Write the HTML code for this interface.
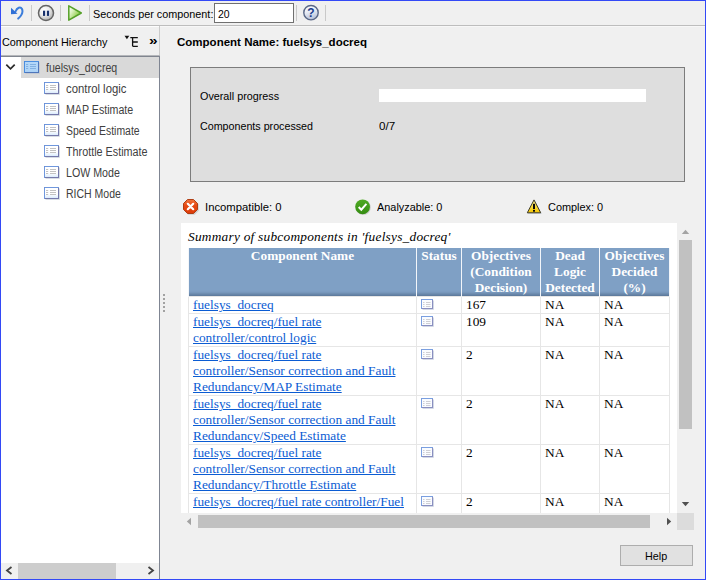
<!DOCTYPE html>
<html><head>
<meta charset="utf-8">
<title>Component Analysis</title>
<style>
html,body{margin:0;padding:0;}
body{width:706px;height:580px;overflow:hidden;background:#f0f0f0;font-family:"Liberation Sans",sans-serif;font-size:11px;color:#000;position:relative;}
.abs{position:absolute;}
.f{position:absolute;white-space:nowrap;transform-origin:0 50%;display:block;}
#frame{position:absolute;left:0;top:0;width:704px;height:578px;border:1px solid #3349f6;z-index:50;}
.sep{position:absolute;top:5px;width:1px;height:16px;background:#c9c9c9;}
#web{position:absolute;left:181px;top:223px;width:496px;height:290px;background:#fff;overflow:hidden;font-family:"Liberation Serif",serif;}
#web table{border-collapse:collapse;position:absolute;left:7px;top:25px;table-layout:fixed;width:481px;}
#web th{background:#7fa0c5;background-image:linear-gradient(to bottom,#7fa0c5 0,#7fa0c5 42px,#7b9bbf 44px,#5b7799 48px);color:#fff;font-weight:bold;font-size:13.33px;line-height:16px;height:48px;vertical-align:top;padding:0 1px;border-left:1px solid #f3f6fa;border-right:1px solid #f3f6fa;text-align:center;}
#web td{font-size:13.33px;line-height:16px;vertical-align:top;padding:0 0 0 4px;border:1px solid #e6e6e6;color:#000;white-space:nowrap;overflow:hidden;}
#web td a{color:#0b5cd3;text-decoration:underline;}
</style>
</head>
<body>
<!-- toolbar -->
<div class="abs" style="left:1px;top:25px;width:704px;height:1px;background:#bdbdbd"></div>
<div class="abs" style="left:1px;top:26px;width:158px;height:1px;background:#fdfdfd"></div>
<div class="abs" style="left:160px;top:26px;width:545px;height:1px;background:#f7f7f7"></div>
<svg class="abs" style="left:10px;top:5px" width="15" height="15" viewBox="0 0 15 15"><path d="M5.500 6.500C7 2.500 10.500 1.200 12 4C13.300 7 11 11 8.200 13.600" fill="none" stroke="#3b7ddb" stroke-width="2" stroke-linecap="round"></path><path d="M1 2.800L1 9.200L7.500 8.800Z" fill="#2f6fd6"></path></svg>
<div class="sep" style="left:31px"></div>
<svg class="abs" style="left:37px;top:4px" width="18" height="18" viewBox="0 0 18 18"><defs><radialGradient id="pg" cx="0.38" cy="0.32" r="0.75"><stop offset="0" stop-color="#ffffff"></stop><stop offset="0.45" stop-color="#ececec"></stop><stop offset="1" stop-color="#a9a9a9"></stop></radialGradient></defs><circle cx="9" cy="9" r="7.500" fill="url(#pg)" stroke="#646464" stroke-width="1.500"></circle><rect x="6" y="6.700" width="2.100" height="5.200" fill="#17306a"></rect><rect x="9.900" y="6.700" width="2.100" height="5.200" fill="#17306a"></rect><rect x="8.100" y="6.700" width="0.700" height="5.200" fill="#c9d2f0"></rect><rect x="12" y="6.700" width="0.700" height="5.200" fill="#c9d2f0"></rect></svg>
<div class="sep" style="left:60px"></div>
<svg class="abs" style="left:67px;top:4px" width="16" height="18" viewBox="0 0 16 18"><defs><linearGradient id="gg" x1="0" y1="0.100" x2="0.900" y2="0.800"><stop offset="0" stop-color="#ffffff"></stop><stop offset="0.350" stop-color="#d9f0bd"></stop><stop offset="0.700" stop-color="#a3d668"></stop><stop offset="1" stop-color="#8cc94a"></stop></linearGradient></defs><path d="M1.800 1.800L14.300 9L1.800 16.200Z" fill="url(#gg)" stroke="#55a028" stroke-width="1.500" stroke-linejoin="round"></path></svg>
<div class="sep" style="left:89px"></div>
<span class="f" style="left: 92.6px; top: 7.19px; font-size: 11px; line-height: 14px; --w: 120.4; transform: scaleX(0.9844);">Seconds per component:</span>
<div class="abs" style="left:214px;top:3px;width:78px;height:18px;background:#fff;border:1px solid #707070;"></div>
<span class="f" style="left: 218.2px; top: 7.19px; font-size: 11px; line-height: 14px; --w: 11.6; transform: scaleX(0.9469);">20</span>
<div class="sep" style="left:296px"></div>
<svg class="abs" style="left:302px;top:4px" width="18" height="18" viewBox="0 0 18 18"><defs><linearGradient id="hg" x1="0" y1="0" x2="0.300" y2="1"><stop offset="0" stop-color="#ffffff"></stop><stop offset="0.500" stop-color="#e8ecf5"></stop><stop offset="1" stop-color="#b9c4dc"></stop></linearGradient></defs><circle cx="9" cy="8.700" r="7.200" fill="url(#hg)" stroke="#5a6887" stroke-width="1.400"></circle><text x="9" y="13" text-anchor="middle" font-family="Liberation Sans, sans-serif" font-weight="bold" font-size="12" fill="#1b3c8c">?</text></svg>
<div class="sep" style="left:325px"></div>

<!-- left panel -->
<div class="abs" style="left:159px;top:26px;width:1px;height:30px;background:#cacaca"></div>
<div class="abs" style="left:1px;top:57px;width:158px;height:506px;background:#fff"></div>
<div class="abs" style="left:1px;top:55px;width:159px;height:1px;background:#b4b6ba"></div>
<div class="abs" style="left:1px;top:56px;width:159px;height:1px;background:#80858f"></div>
<div class="abs" style="left:159px;top:56px;width:1px;height:523px;background:#7f8592"></div>
<span class="f" style="left: 1.6px; top: 35.19px; font-size: 11px; line-height: 14px; --w: 105.4; transform: scaleX(0.985);">Component Hierarchy</span>
<svg class="abs" style="left:124px;top:35px" width="15" height="13" viewBox="0 0 15 13"><path d="M0.500 0.800L5.300 0.800L2.900 4.200Z" fill="#111"></path><path d="M6.300 2.600H13.800M8.600 2.600V11.300M8.600 7H13.800M8.600 11.300H13.800" stroke="#111" stroke-width="1.300" fill="none"></path></svg>
<span class="f" style="left: 148.5px; top: 32.5px; font-size: 13px; line-height: 16px; font-weight: bold; --w: 8.600; transform: scaleX(1.1888);">»</span>
<div class="abs" style="left:21px;top:57px;width:138px;height:21px;background:#d9d9d9"></div>
<svg class="abs" style="left:5px;top:63px" width="11" height="8" viewBox="0 0 11 8"><path d="M1.300 1.600L5.500 5.900L9.700 1.600" fill="none" stroke="#2b2b2b" stroke-width="1.700"></path></svg>
<svg class="abs" style="left:24px;top:61px" width="16" height="13" viewBox="0 0 16 13"><defs><linearGradient id="ig1" x1="0" y1="0" x2="0" y2="1"><stop offset="0" stop-color="#b3d7f8"></stop><stop offset="0.6" stop-color="#b3d7f8"></stop><stop offset="1" stop-color="#a9d0f6"></stop></linearGradient></defs><path d="M1.500 12.500H15.500V1.500" stroke="#c3c9d3" fill="none"></path><rect x="0.500" y="0.500" width="14" height="11" fill="url(#ig1)" stroke="#4f76ba"></rect><path d="M0.500 12V0.500H15" stroke="#4a8ee0" fill="none"></path><path d="M2 3.500h2.200M6 3.500h6M2 5.500h2.200M6 5.500h6M2 7.500h2.200M6 7.500h6" stroke="#82b1e2" stroke-width="1"></path></svg>
<span class="f" style="left: 45.7px; top: 61.34px; font-size: 12px; line-height: 15px; --w: 71.2; color: rgb(64, 64, 64); transform: scaleX(0.8821);">fuelsys_docreq</span>
<svg class="abs" style="left:44px;top:82px" width="16" height="13" viewBox="0 0 16 13"><defs><linearGradient id="ig2" x1="0" y1="0" x2="0" y2="1"><stop offset="0" stop-color="#ffffff"></stop><stop offset="0.6" stop-color="#ffffff"></stop><stop offset="1" stop-color="#d6e9fc"></stop></linearGradient></defs><path d="M1.500 12.500H15.500V1.500" stroke="#d6dde4" fill="none"></path><rect x="0.500" y="0.500" width="14" height="11" fill="url(#ig2)" stroke="#7579ab"></rect><path d="M0.500 12V0.500H15" stroke="#6f97dd" fill="none"></path><path d="M2 3.500h2.200M6 3.500h6M2 5.500h2.200M6 5.500h6M2 7.500h2.200M6 7.500h6" stroke="#c2c2c2" stroke-width="1"></path></svg>
<span class="f" style="left: 66.4px; top: 82.34px; font-size: 12px; line-height: 15px; --w: 60.4; color: rgb(64, 64, 64); transform: scaleX(0.9433);">control logic</span>
<svg class="abs" style="left:44px;top:103px" width="16" height="13" viewBox="0 0 16 13"><defs><linearGradient id="ig3" x1="0" y1="0" x2="0" y2="1"><stop offset="0" stop-color="#ffffff"></stop><stop offset="0.6" stop-color="#ffffff"></stop><stop offset="1" stop-color="#d6e9fc"></stop></linearGradient></defs><path d="M1.500 12.500H15.500V1.500" stroke="#d6dde4" fill="none"></path><rect x="0.500" y="0.500" width="14" height="11" fill="url(#ig3)" stroke="#7579ab"></rect><path d="M0.500 12V0.500H15" stroke="#6f97dd" fill="none"></path><path d="M2 3.500h2.200M6 3.500h6M2 5.500h2.200M6 5.500h6M2 7.500h2.200M6 7.500h6" stroke="#c2c2c2" stroke-width="1"></path></svg>
<span class="f" style="left: 66.4px; top: 103.34px; font-size: 12px; line-height: 15px; --w: 67.2; color: rgb(64, 64, 64); transform: scaleX(0.8864);">MAP Estimate</span>
<svg class="abs" style="left:44px;top:124px" width="16" height="13" viewBox="0 0 16 13"><defs><linearGradient id="ig4" x1="0" y1="0" x2="0" y2="1"><stop offset="0" stop-color="#ffffff"></stop><stop offset="0.6" stop-color="#ffffff"></stop><stop offset="1" stop-color="#d6e9fc"></stop></linearGradient></defs><path d="M1.500 12.500H15.500V1.500" stroke="#d6dde4" fill="none"></path><rect x="0.500" y="0.500" width="14" height="11" fill="url(#ig4)" stroke="#7579ab"></rect><path d="M0.500 12V0.500H15" stroke="#6f97dd" fill="none"></path><path d="M2 3.500h2.200M6 3.500h6M2 5.500h2.200M6 5.500h6M2 7.500h2.200M6 7.500h6" stroke="#c2c2c2" stroke-width="1"></path></svg>
<span class="f" style="left: 66.4px; top: 124.34px; font-size: 12px; line-height: 15px; --w: 73.6; color: rgb(64, 64, 64); transform: scaleX(0.8688);">Speed Estimate</span>
<svg class="abs" style="left:44px;top:145px" width="16" height="13" viewBox="0 0 16 13"><defs><linearGradient id="ig5" x1="0" y1="0" x2="0" y2="1"><stop offset="0" stop-color="#ffffff"></stop><stop offset="0.6" stop-color="#ffffff"></stop><stop offset="1" stop-color="#d6e9fc"></stop></linearGradient></defs><path d="M1.500 12.500H15.500V1.500" stroke="#d6dde4" fill="none"></path><rect x="0.500" y="0.500" width="14" height="11" fill="url(#ig5)" stroke="#7579ab"></rect><path d="M0.500 12V0.500H15" stroke="#6f97dd" fill="none"></path><path d="M2 3.500h2.200M6 3.500h6M2 5.500h2.200M6 5.500h6M2 7.500h2.200M6 7.500h6" stroke="#c2c2c2" stroke-width="1"></path></svg>
<span class="f" style="left: 66.4px; top: 145.34px; font-size: 12px; line-height: 15px; --w: 81.6; color: rgb(64, 64, 64); transform: scaleX(0.8996);">Throttle Estimate</span>
<svg class="abs" style="left:44px;top:166px" width="16" height="13" viewBox="0 0 16 13"><defs><linearGradient id="ig6" x1="0" y1="0" x2="0" y2="1"><stop offset="0" stop-color="#ffffff"></stop><stop offset="0.6" stop-color="#ffffff"></stop><stop offset="1" stop-color="#d6e9fc"></stop></linearGradient></defs><path d="M1.500 12.500H15.500V1.500" stroke="#d6dde4" fill="none"></path><rect x="0.500" y="0.500" width="14" height="11" fill="url(#ig6)" stroke="#7579ab"></rect><path d="M0.500 12V0.500H15" stroke="#6f97dd" fill="none"></path><path d="M2 3.500h2.200M6 3.500h6M2 5.500h2.200M6 5.500h6M2 7.500h2.200M6 7.500h6" stroke="#c2c2c2" stroke-width="1"></path></svg>
<span class="f" style="left: 66.4px; top: 166.34px; font-size: 12px; line-height: 15px; --w: 53.9; color: rgb(64, 64, 64); transform: scaleX(0.8882);">LOW Mode</span>
<svg class="abs" style="left:44px;top:187px" width="16" height="13" viewBox="0 0 16 13"><defs><linearGradient id="ig7" x1="0" y1="0" x2="0" y2="1"><stop offset="0" stop-color="#ffffff"></stop><stop offset="0.6" stop-color="#ffffff"></stop><stop offset="1" stop-color="#d6e9fc"></stop></linearGradient></defs><path d="M1.500 12.500H15.500V1.500" stroke="#d6dde4" fill="none"></path><rect x="0.500" y="0.500" width="14" height="11" fill="url(#ig7)" stroke="#7579ab"></rect><path d="M0.500 12V0.500H15" stroke="#6f97dd" fill="none"></path><path d="M2 3.500h2.200M6 3.500h6M2 5.500h2.200M6 5.500h6M2 7.500h2.200M6 7.500h6" stroke="#c2c2c2" stroke-width="1"></path></svg>
<span class="f" style="left: 66.4px; top: 187.34px; font-size: 12px; line-height: 15px; --w: 54.9; color: rgb(64, 64, 64); transform: scaleX(0.8758);">RICH Mode</span>

<!-- left hscroll -->
<div class="abs" style="left:1px;top:563px;width:158px;height:16px;background:#f0f0f0"></div>
<div class="abs" style="left:18px;top:563px;width:98px;height:16px;background:#cdcdcd"></div>
<svg class="abs" style="left:5px;top:566px" width="8" height="9" viewBox="0 0 8 9"><path d="M6.500 1L2 4.500L6.500 8" fill="none" stroke="#444" stroke-width="1.800"></path></svg>
<svg class="abs" style="left:147px;top:566px" width="8" height="9" viewBox="0 0 8 9"><path d="M1.500 1L6 4.500L1.500 8" fill="none" stroke="#444" stroke-width="1.800"></path></svg>

<!-- splitter dots -->
<div class="abs" style="left:163px;top:294px;width:2px;height:2px;background:#a2a2a2;box-shadow:0 4px 0 #a2a2a2,0 8px 0 #a2a2a2,0 12px 0 #a2a2a2,0 16px 0 #a2a2a2"></div>

<!-- right panel -->
<span class="f" style="left: 176.6px; top: 35.19px; font-size: 11px; line-height: 14px; --w: 190; font-weight: bold; transform: scaleX(1.0466);">Component Name: fuelsys_docreq</span>
<div class="abs" style="left:190px;top:67px;width:493px;height:113px;background:#dedede;border:1px solid #7c7c7c;"></div>
<span class="f" style="left: 199.8px; top: 89.19px; font-size: 11px; line-height: 14px; --w: 79.1; transform: scaleX(0.9801);">Overall progress</span>
<div class="abs" style="left:379px;top:89px;width:267px;height:13px;background:#fff;"></div>
<span class="f" style="left: 199.8px; top: 119.19px; font-size: 11px; line-height: 14px; --w: 113; transform: scaleX(0.9726);">Components processed</span>
<span class="f" style="left: 379.4px; top: 119.19px; font-size: 11px; line-height: 14px; --w: 16.2; transform: scaleX(1.059);">0/7</span>

<svg class="abs" style="left:182px;top:198px" width="18" height="18" viewBox="0 0 18 18"><defs><linearGradient id="rg" x1="0" y1="0" x2="0" y2="1"><stop offset="0" stop-color="#f0743c"></stop><stop offset="0.45" stop-color="#e64812"></stop><stop offset="1" stop-color="#dd3b08"></stop></linearGradient></defs><path d="M6.300 2.300H12.700L16.700 6.300V12.700L12.700 16.700H6.300L2.300 12.700V6.300Z" fill="#b9b9b9" opacity="0.6"></path><path d="M5.500 1.500H11.500L15.500 5.500V11.500L11.500 15.500H5.500L1.500 11.500V5.500Z" fill="url(#rg)" stroke="#a83309" stroke-width="0.900"></path><path d="M5.800 5.800L11.200 11.200M11.200 5.800L5.800 11.200" stroke="#fff" stroke-width="2.200" stroke-linecap="round"></path></svg>
<span class="f" style="left: 204.9px; top: 200.19px; font-size: 11px; line-height: 14px; --w: 76.5; transform: scaleX(1.0253);">Incompatible: 0</span>
<svg class="abs" style="left:354px;top:198px" width="18" height="18" viewBox="0 0 18 18"><defs><linearGradient id="cg" x1="0" y1="0" x2="0" y2="1"><stop offset="0" stop-color="#4fab24"></stop><stop offset="1" stop-color="#358c12"></stop></linearGradient></defs><circle cx="9.300" cy="9.500" r="7.500" fill="#b5b5b5" opacity="0.600"></circle><circle cx="8.600" cy="8.800" r="7.400" fill="url(#cg)"></circle><path d="M4.700 9L7.300 11.700L12.400 5.900" fill="none" stroke="#fff" stroke-width="2"></path></svg>
<span class="f" style="left: 377px; top: 200.19px; font-size: 11px; line-height: 14px; --w: 65.4; transform: scaleX(0.9902);">Analyzable: 0</span>
<svg class="abs" style="left:526px;top:198px" width="18" height="18" viewBox="0 0 18 18"><defs><linearGradient id="wg" x1="0" y1="0" x2="0" y2="1"><stop offset="0" stop-color="#fff09a"></stop><stop offset="0.500" stop-color="#fbdc3c"></stop><stop offset="1" stop-color="#f4c400"></stop></linearGradient></defs><path d="M8.800 2.400L15.900 15.800H1.700Z" fill="#a9b4c4" opacity="0.550"></path><path d="M8 1.900L14.700 14.800H1.300Z" fill="url(#wg)" stroke="#3d3a2a" stroke-width="1" stroke-linejoin="round"></path><rect x="7" y="5.800" width="2" height="5.300" fill="#0a0a0a"></rect><rect x="7" y="12" width="2" height="1.700" fill="#0a0a0a"></rect></svg>
<span class="f" style="left: 548.1px; top: 200.19px; font-size: 11px; line-height: 14px; --w: 55.2; transform: scaleX(0.9921);">Complex: 0</span>

<!-- web view -->
<div id="web">
<span class="f" style="left: 7px; top: 6.1px; font-size: 13.33px; line-height: 16px; font-style: italic; --w: 262.600; --ls: 1; transform: none; letter-spacing: 0.247px;">Summary of subcomponents in 'fuelsys_docreq'</span>
<table>
<colgroup><col style="width:228px"><col style="width:45px"><col style="width:79px"><col style="width:59px"><col style="width:70px"></colgroup>
<tbody><tr><th>Component Name</th><th>Status</th><th>Objectives<br>(Condition<br>Decision)</th><th>Dead<br>Logic<br>Detected</th><th>Objectives<br>Decided<br>(%)</th></tr>
<tr><td class="c1"><a>fuelsys_docreq</a></td><td><svg width="13" height="11" viewBox="0 0 13 11" style="display:block;margin-top:2px"><path d="M1.500 10.500H12.500V1.500" stroke="#d3d9e6" fill="none"></path><rect x="0.500" y="0.500" width="11" height="9" fill="#fafcff" stroke="#8a8fc0"></rect><path d="M0.500 10V0.500H12" stroke="#7a9fe0" fill="none"></path><path d="M2 3.500h1.500M5 3.500h4.500M2 5.500h1.500M5 5.500h4.500M2 7.500h1.500M5 7.500h4.500" stroke="#cfcfd4" stroke-width="1"></path></svg></td><td>167</td><td>NA</td><td>NA</td></tr>
<tr><td class="c1"><a>fuelsys_docreq/fuel rate<br>controller/control logic</a></td><td><svg width="13" height="11" viewBox="0 0 13 11" style="display:block;margin-top:2px"><path d="M1.500 10.500H12.500V1.500" stroke="#d3d9e6" fill="none"></path><rect x="0.500" y="0.500" width="11" height="9" fill="#fafcff" stroke="#8a8fc0"></rect><path d="M0.500 10V0.500H12" stroke="#7a9fe0" fill="none"></path><path d="M2 3.500h1.500M5 3.500h4.500M2 5.500h1.500M5 5.500h4.500M2 7.500h1.500M5 7.500h4.500" stroke="#cfcfd4" stroke-width="1"></path></svg></td><td>109</td><td>NA</td><td>NA</td></tr>
<tr><td class="c1"><a>fuelsys_docreq/fuel rate<br>controller/Sensor correction and Fault<br>Redundancy/MAP Estimate</a></td><td><svg width="13" height="11" viewBox="0 0 13 11" style="display:block;margin-top:2px"><path d="M1.500 10.500H12.500V1.500" stroke="#d3d9e6" fill="none"></path><rect x="0.500" y="0.500" width="11" height="9" fill="#fafcff" stroke="#8a8fc0"></rect><path d="M0.500 10V0.500H12" stroke="#7a9fe0" fill="none"></path><path d="M2 3.500h1.500M5 3.500h4.500M2 5.500h1.500M5 5.500h4.500M2 7.500h1.500M5 7.500h4.500" stroke="#cfcfd4" stroke-width="1"></path></svg></td><td>2</td><td>NA</td><td>NA</td></tr>
<tr><td class="c1"><a>fuelsys_docreq/fuel rate<br>controller/Sensor correction and Fault<br>Redundancy/Speed Estimate</a></td><td><svg width="13" height="11" viewBox="0 0 13 11" style="display:block;margin-top:2px"><path d="M1.500 10.500H12.500V1.500" stroke="#d3d9e6" fill="none"></path><rect x="0.500" y="0.500" width="11" height="9" fill="#fafcff" stroke="#8a8fc0"></rect><path d="M0.500 10V0.500H12" stroke="#7a9fe0" fill="none"></path><path d="M2 3.500h1.500M5 3.500h4.500M2 5.500h1.500M5 5.500h4.500M2 7.500h1.500M5 7.500h4.500" stroke="#cfcfd4" stroke-width="1"></path></svg></td><td>2</td><td>NA</td><td>NA</td></tr>
<tr><td class="c1"><a>fuelsys_docreq/fuel rate<br>controller/Sensor correction and Fault<br>Redundancy/Throttle Estimate</a></td><td><svg width="13" height="11" viewBox="0 0 13 11" style="display:block;margin-top:2px"><path d="M1.500 10.500H12.500V1.500" stroke="#d3d9e6" fill="none"></path><rect x="0.500" y="0.500" width="11" height="9" fill="#fafcff" stroke="#8a8fc0"></rect><path d="M0.500 10V0.500H12" stroke="#7a9fe0" fill="none"></path><path d="M2 3.500h1.500M5 3.500h4.500M2 5.500h1.500M5 5.500h4.500M2 7.500h1.500M5 7.500h4.500" stroke="#cfcfd4" stroke-width="1"></path></svg></td><td>2</td><td>NA</td><td>NA</td></tr>
<tr><td class="c1"><a>fuelsys_docreq/fuel rate controller/Fuel<br>Calculation/Switchable Compensation/LOW Mode</a></td><td><svg width="13" height="11" viewBox="0 0 13 11" style="display:block;margin-top:2px"><path d="M1.500 10.500H12.500V1.500" stroke="#d3d9e6" fill="none"></path><rect x="0.500" y="0.500" width="11" height="9" fill="#fafcff" stroke="#8a8fc0"></rect><path d="M0.500 10V0.500H12" stroke="#7a9fe0" fill="none"></path><path d="M2 3.500h1.500M5 3.500h4.500M2 5.500h1.500M5 5.500h4.500M2 7.500h1.500M5 7.500h4.500" stroke="#cfcfd4" stroke-width="1"></path></svg></td><td>2</td><td>NA</td><td>NA</td></tr>
</tbody></table>
</div>
<!-- v scrollbar -->
<div class="abs" style="left:677px;top:223px;width:17px;height:290px;background:#f0f0f0"></div>
<div class="abs" style="left:679px;top:240px;width:13px;height:189px;background:#c1c1c1"></div>
<svg class="abs" style="left:681px;top:229px" width="9" height="6" viewBox="0 0 9 6"><path d="M0.800 5L4.500 0.800L8.200 5Z" fill="#a3a3a3"></path></svg>
<svg class="abs" style="left:681px;top:501px" width="9" height="6" viewBox="0 0 9 6"><path d="M0.800 1L4.500 5.200L8.200 1Z" fill="#505050"></path></svg>
<!-- h scrollbar -->
<div class="abs" style="left:181px;top:513px;width:496px;height:17px;background:#f0f0f0"></div>
<div class="abs" style="left:198px;top:515px;width:452px;height:13px;background:#c1c1c1"></div>
<svg class="abs" style="left:186px;top:517px" width="6" height="9" viewBox="0 0 6 9"><path d="M5 0.800L0.800 4.500L5 8.200Z" fill="#a3a3a3"></path></svg>
<svg class="abs" style="left:666px;top:517px" width="6" height="9" viewBox="0 0 6 9"><path d="M1 0.800L5.200 4.500L1 8.200Z" fill="#505050"></path></svg>
<div class="abs" style="left:677px;top:513px;width:17px;height:17px;background:#dcdcdc"></div>

<!-- help button -->
<div class="abs" style="left:620px;top:545px;width:71px;height:19px;background:#e1e1e1;border:1px solid #adadad;"></div>
<span class="f" style="left: 645px; top: 549.39px; font-size: 11px; line-height: 14px; --w: 22.2; transform: scaleX(0.9812);">Help</span>
<div id="frame"></div>


</body></html>
